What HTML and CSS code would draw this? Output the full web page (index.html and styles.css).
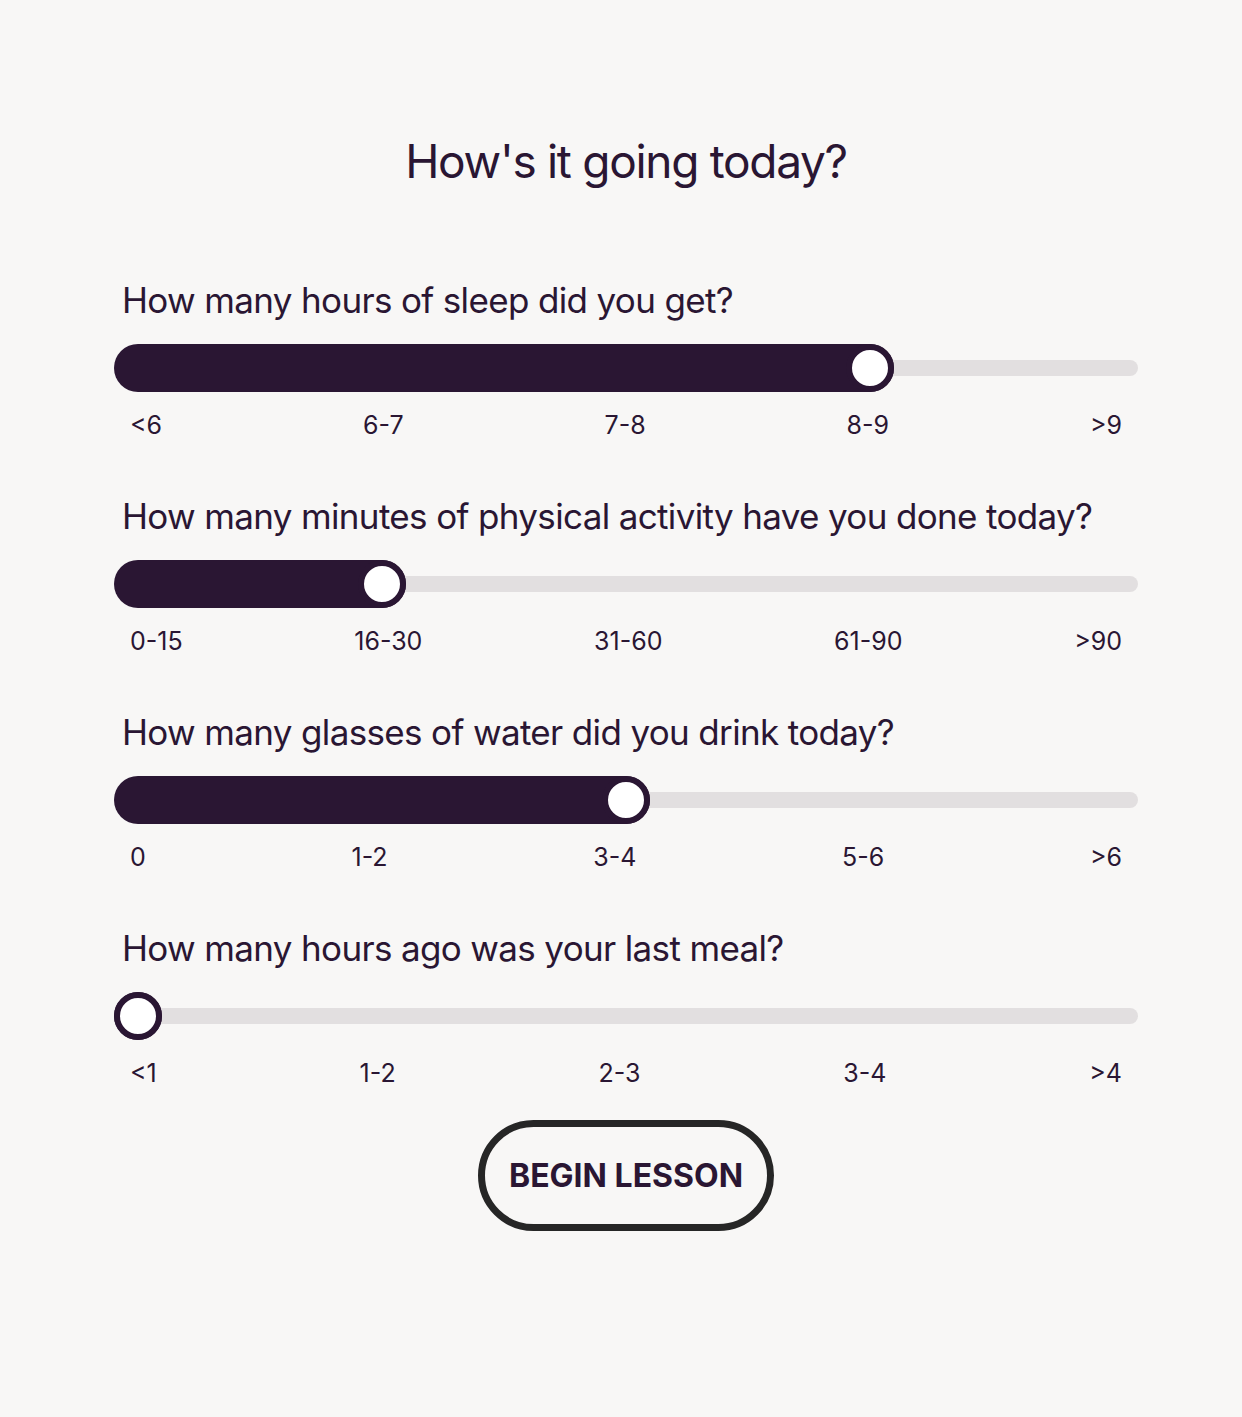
FILE: index.html
```html
<!DOCTYPE html>
<html lang="en">
<head>
<meta charset="utf-8">
<title>How's it going today?</title>
<link rel="stylesheet" href="styles.css">
</head>
<body>
<main class="page">
  <h1 class="title">How's it going today?</h1>

  <section class="question">
    <h2 class="q-text">How many hours of sleep did you get?</h2>
    <div class="slider">
      <div class="track"></div>
      <div class="fill" style="width: calc(244px * 3 + 48px)"></div>
      <div class="thumb" style="left: calc(244px * 3)"></div>
    </div>
    <div class="labels"><span>&lt;6</span><span>6-7</span><span>7-8</span><span>8-9</span><span>&gt;9</span></div>
  </section>

  <section class="question">
    <h2 class="q-text">How many minutes of physical activity have you done today?</h2>
    <div class="slider">
      <div class="track"></div>
      <div class="fill" style="width: calc(244px * 1 + 48px)"></div>
      <div class="thumb" style="left: calc(244px * 1)"></div>
    </div>
    <div class="labels"><span>0-15</span><span>16-30</span><span>31-60</span><span>61-90</span><span>&gt;90</span></div>
  </section>

  <section class="question">
    <h2 class="q-text">How many glasses of water did you drink today?</h2>
    <div class="slider">
      <div class="track"></div>
      <div class="fill" style="width: calc(244px * 2 + 48px)"></div>
      <div class="thumb" style="left: calc(244px * 2)"></div>
    </div>
    <div class="labels"><span>0</span><span>1-2</span><span>3-4</span><span>5-6</span><span>&gt;6</span></div>
  </section>

  <section class="question">
    <h2 class="q-text">How many hours ago was your last meal?</h2>
    <div class="slider">
      <div class="track"></div>
      <div class="fill" style="width: 48px"></div>
      <div class="thumb" style="left: 0px"></div>
    </div>
    <div class="labels"><span>&lt;1</span><span>1-2</span><span>2-3</span><span>3-4</span><span>&gt;4</span></div>
  </section>

  <div class="actions">
    <button class="begin" type="button">BEGIN LESSON</button>
  </div>
</main>
</body>
</html>
```

FILE: styles.css
```css
* { box-sizing: border-box; }

html, body {
  margin: 0;
  padding: 0;
  background: #f8f7f6;
}

body {
  font-family: Inter, "Noto Sans", sans-serif;
  color: #2a1633;
}

.page {
  width: 1024px;
  margin-left: 114px;
  padding-top: 132px;
  display: flex;
  flex-direction: column;
}

.title {
  margin: 0 0 88px;
  font-size: 46px;
  font-weight: 400;
  line-height: 58px;
  text-align: center;
  letter-spacing: -1.3px;
}

.question {
  display: flex;
  flex-direction: column;
  margin-bottom: 55px;
}

.question:last-of-type {
  margin-bottom: 33px;
}

.q-text {
  margin: 0 0 22px 8px;
  font-size: 35px;
  font-weight: 400;
  line-height: 44px;
  letter-spacing: -0.65px;
}

.slider {
  position: relative;
  height: 48px;
}

.track {
  position: absolute;
  left: 0;
  right: 0;
  top: 16px;
  height: 16px;
  border-radius: 8px;
  background: #e2dfe0;
}

.fill {
  position: absolute;
  left: 0;
  top: 0;
  height: 48px;
  border-radius: 24px;
  background: #2a1633;
}

.thumb {
  position: absolute;
  top: 0;
  width: 48px;
  height: 48px;
  border-radius: 50%;
  background: #ffffff;
  border: 6px solid #2a1633;
}

.labels {
  display: flex;
  justify-content: space-between;
  padding: 0 16px 0 16px;
  margin-top: 19px;
  font-size: 25px;
  line-height: 28px;
}

.actions {
  display: flex;
  justify-content: center;
}

.begin {
  width: 296px;
  height: 111px;
  border: 7px solid #262626;
  border-radius: 56px;
  background: #f8f7f6;
  font-family: Inter, "Noto Sans", sans-serif;
  font-size: 32px;
  font-weight: 700;
  color: #2a1633;
  letter-spacing: 0;
  padding: 0;
}
```
